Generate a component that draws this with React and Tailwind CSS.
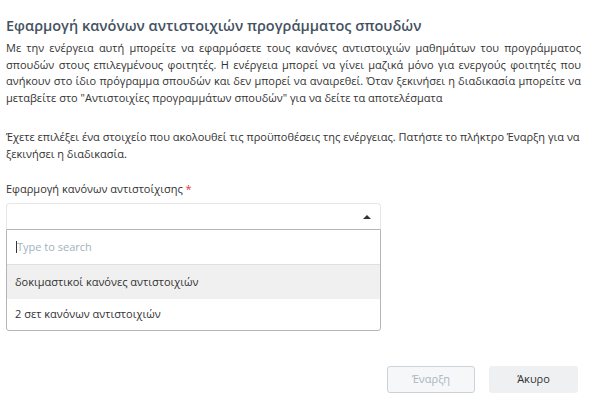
export default function App() {
  return (
    <div
      className="w-[596px] h-[409px] bg-white text-[#333] px-[6px] pt-[16px]"
      style={{ fontFamily: '"Open Sans", "Noto Sans", sans-serif' }}
    >
      {/* Header */}
      <h2 className="text-[14.5px] leading-[20px] font-semibold text-[#44525f]">
        Εφαρμογή κανόνων αντιστοιχιών προγράμματος σπουδών
      </h2>

      {/* Description */}
      <p className="mt-[4px] w-[575px] text-[11px] leading-[16.5px] text-justify text-[#333]">
        Με την ενέργεια αυτή μπορείτε να εφαρμόσετε τους κανόνες αντιστοιχιών μαθημάτων του προγράμματος
        σπουδών στους επιλεγμένους φοιτητές. Η ενέργεια μπορεί να γίνει μαζικά μόνο για ενεργούς φοιτητές που
        ανήκουν στο ίδιο πρόγραμμα σπουδών και δεν μπορεί να αναιρεθεί. Όταν ξεκινήσει η διαδικασία μπορείτε να
        μεταβείτε στο "Αντιστοιχίες προγραμμάτων σπουδών" για να δείτε τα αποτελέσματα
      </p>

      <p className="mt-[22px] w-[575px] text-[11px] leading-[17px] text-[#333]">
        Έχετε επιλέξει ένα στοιχείο που ακολουθεί τις προϋποθέσεις της ενέργειας. Πατήστε το πλήκτρο Έναρξη για να
        ξεκινήσει η διαδικασία.
      </p>

      {/* Field */}
      <div className="mt-[19px] w-[375px]">
        <label className="block text-[11px] leading-[16px] text-[#333]">
          Εφαρμογή κανόνων αντιστοίχισης <span className="text-[#e53935]">*</span>
        </label>
        <div className="mt-[6px] h-[26px] border border-[#e6e6e6] border-b-0 rounded-t-[4px] flex items-center justify-end pr-[9px]">
          <span className="w-0 h-0 border-l-[4px] border-r-[4px] border-b-[4px] border-l-transparent border-r-transparent border-b-[#333]" />
        </div>
        <div className="border border-[#b5b5b5] rounded-b-[3px]">
          <div className="h-[35px] flex items-center px-[9px] border-b border-[#e0e0e0]">
            <span className="w-px h-[12px] bg-[#333]" />
            <span className="text-[11px] text-[#a3b1bb]">Type to search</span>
          </div>
          <div className="h-[34px] flex items-center px-[8px] bg-[#f0f0f0] text-[11px] text-[#333]">
            δοκιμαστικοί κανόνες αντιστοιχιών
          </div>
          <div className="h-[31px] flex items-center px-[8px] text-[11px] text-[#333]">
            2 σετ κανόνων αντιστοιχιών
          </div>
        </div>
      </div>

      {/* Actions */}
      <div className="mt-[35px] flex justify-end gap-[14px] pr-[12px]">
        <button className="w-[88px] h-[27px] rounded-[3px] border border-[#c9d3d9] bg-[#f5f7f8] text-[11px] text-[#a9b6bf]">
          Έναρξη
        </button>
        <button className="w-[89px] h-[27px] rounded-[3px] bg-[#eef0f2] text-[11px] text-[#333]">
          Άκυρο
        </button>
      </div>
    </div>
  );
}
